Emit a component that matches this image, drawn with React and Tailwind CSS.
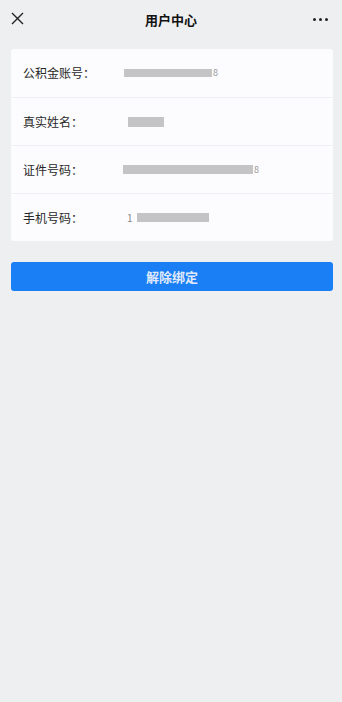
import React from 'react';

const rows = [
  { label: '公积金账号：', lead: '', bar: 'w-[88px] h-[8px]', tail: '8', offset: 'ml-[101px]' },
  { label: '真实姓名：', lead: '', bar: 'w-[36px] h-[10px]', tail: '', offset: 'ml-[105px]' },
  { label: '证件号码：', lead: '', bar: 'w-[130px] h-[9px]', tail: '8', offset: 'ml-[100px]' },
  { label: '手机号码：', lead: '1', bar: 'w-[72px] h-[9px]', tail: '', offset: 'ml-[104px]' },
];

export default function App() {
  return (
    <div
      className="flex min-h-[702px] w-[342px] flex-col bg-[#eeeff1] text-[#333]"
      style={{ fontFamily: '"Noto Sans CJK SC", "Noto Sans", sans-serif' }}
    >
      <div className="relative flex h-[40px] items-center justify-center">
        <svg className="absolute left-[11px] top-[12px] h-[13px] w-[13px]" viewBox="0 0 13 13" fill="none" stroke="#222" strokeWidth="1.4">
          <path d="M1 1l11 11M12 1L1 12" />
        </svg>
        <span className="text-[13px] font-bold text-[#111]">用户中心</span>
        <div className="absolute right-[14px] top-[18px] flex gap-[3px]">
          <span className="h-[3px] w-[3px] rounded-full bg-[#222]" />
          <span className="h-[3px] w-[3px] rounded-full bg-[#222]" />
          <span className="h-[3px] w-[3px] rounded-full bg-[#222]" />
        </div>
      </div>

      <div className="ml-[11px] mr-[9px] mt-[9px] rounded-[3px] bg-[#fcfcfe]">
        {rows.map((row, i) => (
          <div
            key={row.label}
            className={`relative flex h-[48px] items-center px-[12px] ${i > 0 ? 'border-t border-[#eef0f3]' : ''}`}
          >
            <span className="absolute left-[12px] text-[12px] text-[#282828]">{row.label}</span>
            <div className={`flex items-center ${row.offset}`}>
              {row.lead ? <span className="mr-[4px] text-[10px] text-[#888]">{row.lead}</span> : null}
              <span className={`${row.bar} bg-[#c4c4c6]`} />
              {row.tail ? <span className="ml-[1px] text-[9px] text-[#999]">{row.tail}</span> : null}
            </div>
          </div>
        ))}
      </div>

      <button className="ml-[11px] mr-[9px] mt-[21px] flex h-[29px] items-center justify-center rounded-[3px] bg-[#1a7ef5] text-[13px] font-bold text-[#dfe9fb]">
        解除绑定
      </button>
    </div>
  );
}
